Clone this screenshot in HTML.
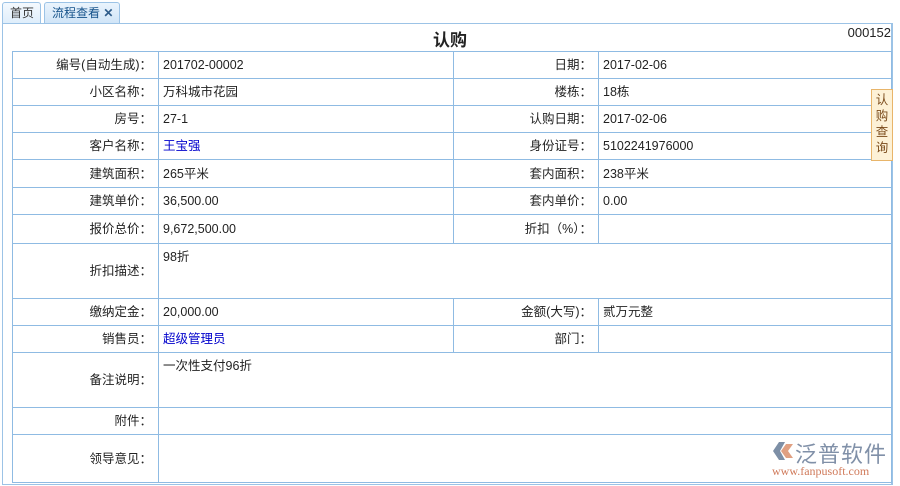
<!DOCTYPE html><html><head><meta charset="utf-8"><style>
body{margin:0;width:900px;height:486px;background:#fff;font-family:"Liberation Sans","Noto Sans CJK SC",sans-serif;font-size:12px;color:#333;position:relative;overflow:hidden}
.tab{position:absolute;top:2px;height:21px;border:1px solid #9cc3e6;border-bottom:none;border-radius:3px 3px 0 0;background:linear-gradient(#f4f9fe,#dfeefb);line-height:21px;font-size:12px;color:#333;padding:0 7px;white-space:nowrap;box-sizing:border-box}
.panel{position:absolute;left:2px;top:23px;width:888px;height:460px;border:1px solid #9cc3e6;border-right:2px solid #9cc3e6}
table{position:absolute;left:12px;top:51px;border-collapse:collapse;width:880px;table-layout:fixed}
td{border:1px solid #8fbbe3;padding:0 4px;font-size:12.5px;color:#222;vertical-align:middle;line-height:16px;white-space:nowrap}
td.l,td.l2{text-align:right;padding-right:6px}
a{color:#00c;text-decoration:none}
td.t{vertical-align:top;padding-top:5px}
</style></head><body>
<div class="tab" style="left:2px;width:39px">首页</div>
<div class="tab" style="left:44px;width:76px;background:linear-gradient(#eaf4fd,#cfe4f7);color:#15528a;height:22px">流程查看 <b style="color:#2e5c8a">✕</b></div>
<div class="panel"></div>
<div style="position:absolute;left:0;width:900px;top:26px;text-align:center;font-size:17px;font-weight:bold;color:#222">认购</div>
<div style="position:absolute;right:9px;top:25px;font-size:13px;color:#222">000152</div>
<table>
<col style="width:146px"><col style="width:295px"><col style="width:145px"><col>
<tr style="height:27px"><td class="l">编号(自动生成)：</td><td>201702-00002</td><td class="l2">日期：</td><td>2017-02-06</td></tr>
<tr style="height:27px"><td class="l">小区名称：</td><td>万科城市花园</td><td class="l2">楼栋：</td><td>18栋</td></tr>
<tr style="height:27px"><td class="l">房号：</td><td>27-1</td><td class="l2">认购日期：</td><td>2017-02-06</td></tr>
<tr style="height:27px"><td class="l">客户名称：</td><td><a>王宝强</a></td><td class="l2">身份证号：</td><td>5102241976000</td></tr>
<tr style="height:28px"><td class="l">建筑面积：</td><td>265平米</td><td class="l2">套内面积：</td><td>238平米</td></tr>
<tr style="height:27px"><td class="l">建筑单价：</td><td>36,500.00</td><td class="l2">套内单价：</td><td>0.00</td></tr>
<tr style="height:29px"><td class="l">报价总价：</td><td>9,672,500.00</td><td class="l2">折扣（%）：</td><td></td></tr>
<tr style="height:55px"><td class="l">折扣描述：</td><td colspan="3" class="t">98折</td></tr>
<tr style="height:27px"><td class="l">缴纳定金：</td><td>20,000.00</td><td class="l2">金额(大写)：</td><td>贰万元整</td></tr>
<tr style="height:27px"><td class="l">销售员：</td><td><a>超级管理员</a></td><td class="l2">部门：</td><td></td></tr>
<tr style="height:55px"><td class="l">备注说明：</td><td colspan="3" class="t">一次性支付96折</td></tr>
<tr style="height:27px"><td class="l">附件：</td><td colspan="3"></td></tr>
<tr style="height:48px"><td class="l">领导意见：</td><td colspan="3"></td></tr>
</table>
<div style="position:absolute;left:871px;top:89px;width:20px;height:68px;background:#fdf1d6;border:1px solid #e8b56a;color:#7a4a1a;font-size:12.5px;line-height:16px;text-align:center;padding-top:2px">认<br>购<br>查<br>询</div>
<div style="position:absolute;left:771px;top:440px;width:22px;height:20px">
<svg width="24" height="22"><path d="M2 11 L8 2 H14 L9 11 L14 20 H8 Z" fill="#7d8fa6"/><path d="M10 11 L15 4 H22 L17 11 L22 18 H15 Z" fill="#e0a082"/></svg></div>
<div style="position:absolute;left:795px;top:437px;font-size:22px;color:#8090a8;letter-spacing:1px">泛普软件</div>
<div style="position:absolute;left:772px;top:464px;font-size:12px;color:#d07a5a;font-family:'Liberation Serif',serif">www.fanpusoft.com</div>
</body></html>
